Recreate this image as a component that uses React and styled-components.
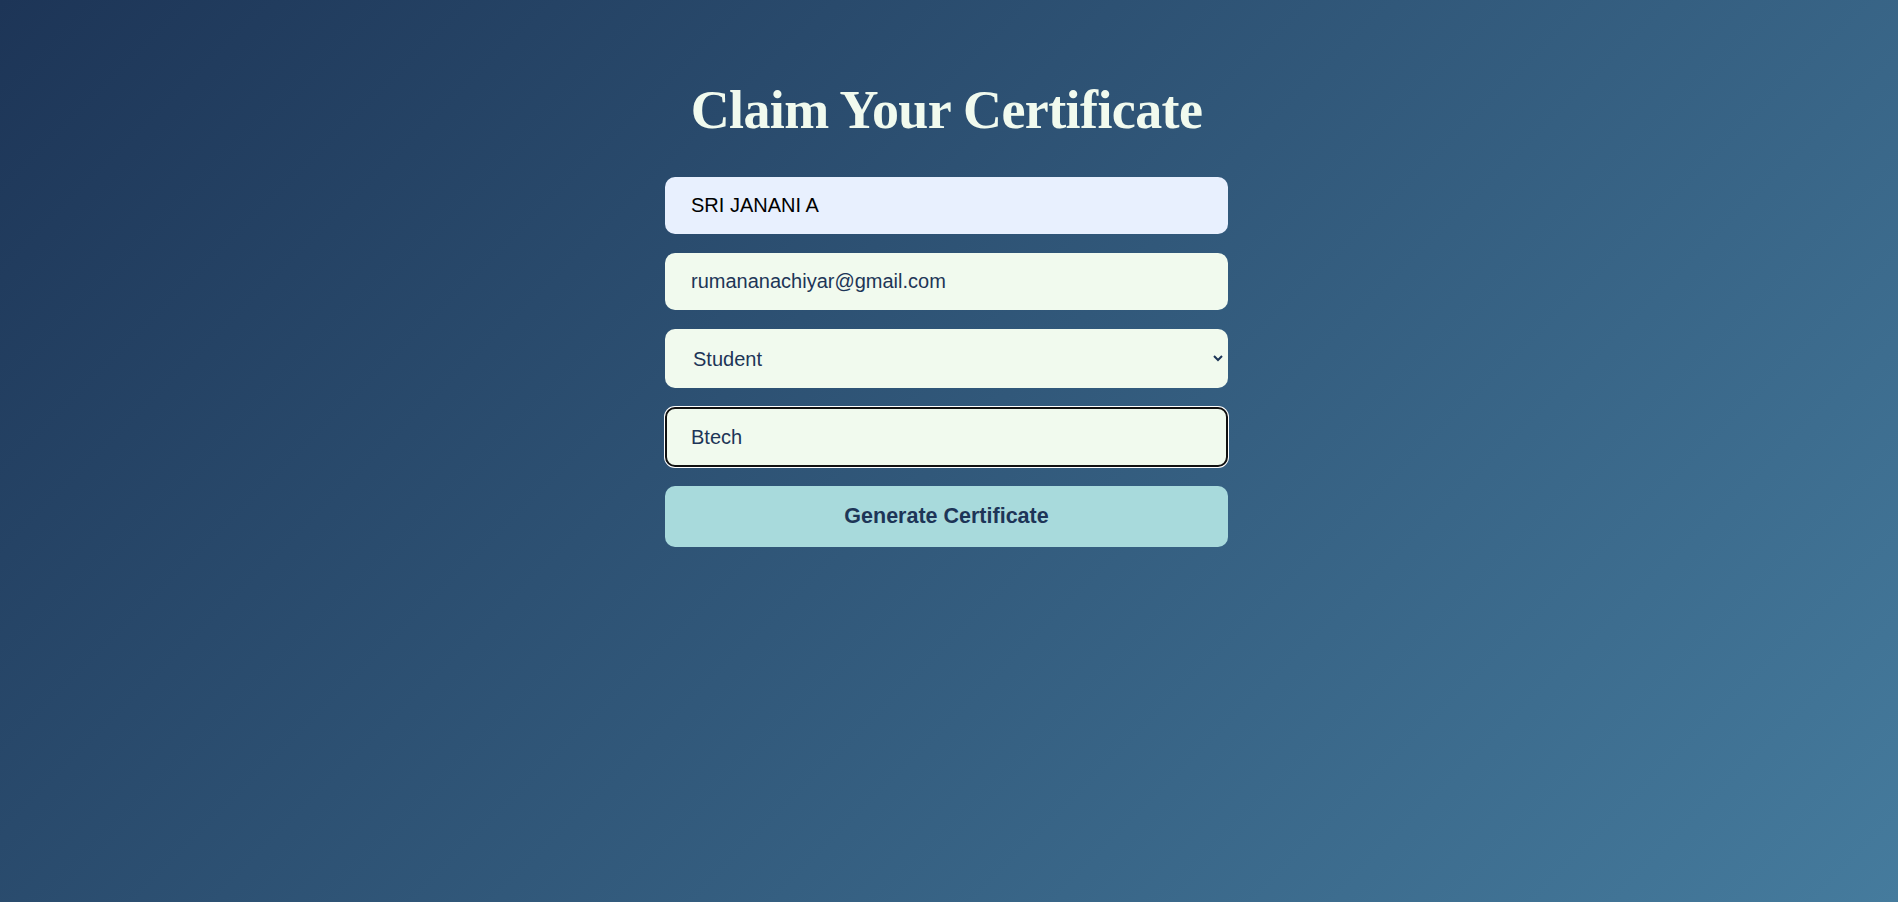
import React from "react";
import styled, { createGlobalStyle } from "styled-components";

const GlobalStyle = createGlobalStyle`
  html, body {
    margin: 0;
    padding: 0;
    height: 100%;
  }
  body {
    font-family: "Liberation Sans", Arial, sans-serif;
    background: linear-gradient(135deg, #1d3557 0%, #457b9d 100%);
    background-attachment: fixed;
    min-height: 100vh;
  }
  #root {
    min-height: 100vh;
  }
`;

const Page = styled.main`
  min-height: 100vh;
  box-sizing: border-box;
  display: flex;
  flex-direction: column;
  align-items: center;
  padding: 78px 5px 0 0;
`;

const Title = styled.h1`
  margin: 0 0 35px;
  font-family: "Liberation Serif", "Times New Roman", serif;
  font-weight: 700;
  font-size: 54px;
  line-height: 64px;
  letter-spacing: -0.6px;
  color: #f1faee;
  text-align: center;
`;

const Form = styled.form`
  width: 563px;
  display: flex;
  flex-direction: column;
  gap: 19px;
`;

const Field = styled.input`
  box-sizing: border-box;
  width: 100%;
  height: ${(p) => (p.$tall ? "60px" : "57px")};
  padding: 0 24px;
  border: 2px solid ${(p) => (p.$focused ? "#111" : "transparent")};
  border-radius: 10px;
  background: ${(p) => (p.$autofill ? "#e8f0fe" : "#f1faee")};
  color: ${(p) => (p.$autofill ? "#000" : "#1d3557")};
  font-family: "Liberation Sans", Arial, sans-serif;
  font-size: 20px;
  outline: none;
  box-shadow: ${(p) => (p.$focused ? "0 0 0 1px #ffffff" : "none")};
  caret-color: #1d3557;
`;

const Select = styled.select`
  box-sizing: border-box;
  width: 100%;
  height: 59px;
  padding: 0 13px 0 22px;
  border: 2px solid transparent;
  border-radius: 10px;
  background: #f1faee;
  color: #1d3557;
  font-family: "Liberation Sans", Arial, sans-serif;
  font-size: 20px;
  outline: none;
`;

const Button = styled.button`
  box-sizing: border-box;
  width: 100%;
  height: 61px;
  border: none;
  border-radius: 10px;
  background: #a8dadc;
  color: #1d3557;
  font-family: "Liberation Sans", Arial, sans-serif;
  font-weight: 700;
  font-size: 21.5px;
  cursor: pointer;
`;

export default function App() {
  return (
    <>
      <GlobalStyle />
      <Page>
        <Title>Claim Your Certificate</Title>
        <Form onSubmit={(e) => e.preventDefault()}>
          <Field type="text" $autofill defaultValue="SRI JANANI A" />
          <Field type="email" defaultValue="rumananachiyar@gmail.com" />
          <Select defaultValue="Student">
            <option value="Student">Student</option>
            <option value="Professional">Professional</option>
          </Select>
          <Field type="text" $focused $tall defaultValue="Btech" autoFocus />
          <Button type="submit">Generate Certificate</Button>
        </Form>
      </Page>
    </>
  );
}
